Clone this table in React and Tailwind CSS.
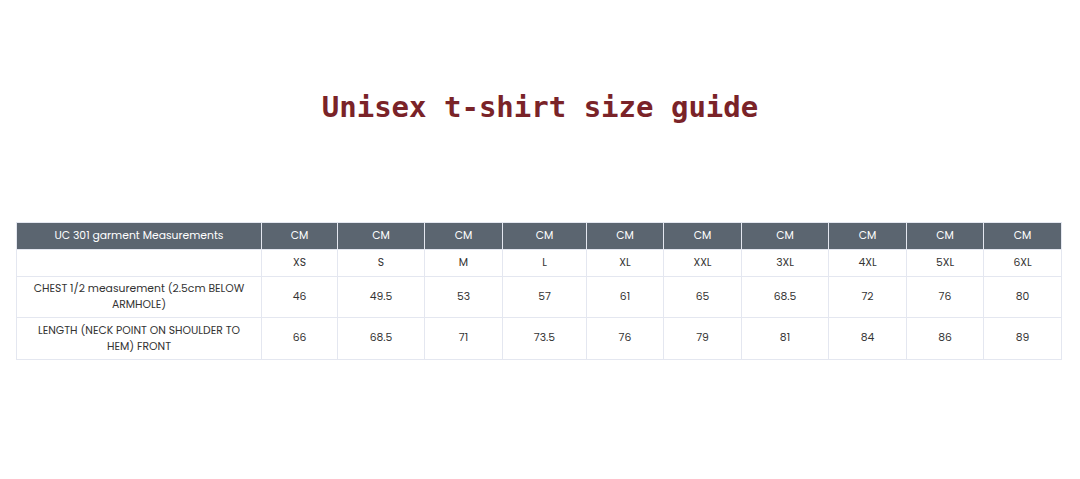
import React from "react";

const sizes = ["XS", "S", "M", "L", "XL", "XXL", "3XL", "4XL", "5XL", "6XL"];
const chest = ["46", "49.5", "53", "57", "61", "65", "68.5", "72", "76", "80"];
const length = ["66", "68.5", "71", "73.5", "76", "79", "81", "84", "86", "89"];
const widths = ["w-[76px]", "w-[87px]", "w-[78px]", "w-[84px]", "w-[77px]", "w-[78px]", "w-[87px]", "w-[78px]", "w-[77px]", "w-[78px]"];

export default function App() {
  const cell = "border border-[#e4e7f0] text-center align-middle px-2";
  return (
    <div className="w-[1080px] h-[479px] bg-white" style={{ fontFamily: "Poppins, 'Noto Sans', Lato, sans-serif" }}>
      <div className="pt-[87px] h-[222px]">
        <h1
          className="text-center text-[29px] font-bold text-[#7a2328] leading-[40px]"
          style={{ fontFamily: "'DejaVu Sans Mono', monospace" }}
        >
          Unisex t-shirt size guide
        </h1>
      </div>
      <div className="px-4">
        <table className="w-[1046px] border-collapse table-fixed text-[10.8px] text-[#333333]">
          <colgroup>
            <col className="w-[245px]" />
            {widths.map((w, i) => (
              <col key={i} className={w} />
            ))}
          </colgroup>
          <tbody>
            <tr className="h-[27px] bg-[#5b6570] text-white">
              <td className="border border-[#e4e7f0] text-center">UC 301 garment Measurements</td>
              {sizes.map((s, i) => (
                <td key={i} className="border border-[#e4e7f0] text-center">CM</td>
              ))}
            </tr>
            <tr className="h-[27px]">
              <td className={cell}></td>
              {sizes.map((s) => (
                <td key={s} className={cell}>{s}</td>
              ))}
            </tr>
            <tr className="h-[41px]">
              <td className={cell + " leading-[16px] px-3"}>CHEST 1/2 measurement (2.5cm BELOW ARMHOLE)</td>
              {chest.map((v, i) => (
                <td key={i} className={cell}>{v}</td>
              ))}
            </tr>
            <tr className="h-[42px]">
              <td className={cell + " leading-[16px] px-3"}>LENGTH (NECK POINT ON SHOULDER TO HEM) FRONT</td>
              {length.map((v, i) => (
                <td key={i} className={cell}>{v}</td>
              ))}
            </tr>
          </tbody>
        </table>
      </div>
    </div>
  );
}
